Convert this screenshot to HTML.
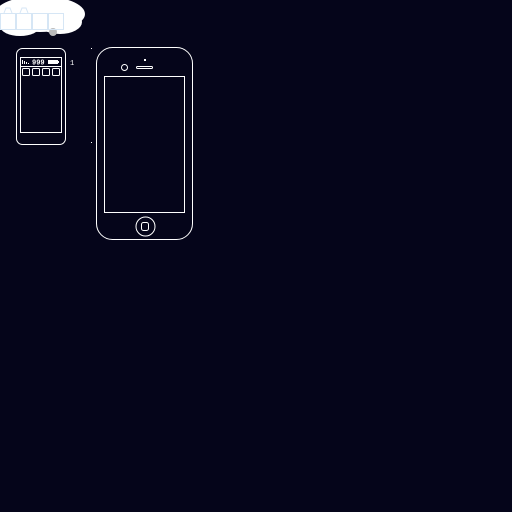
<!DOCTYPE html><html><head><style>body{margin:0;background:#05051a;width:512px;height:512px;overflow:hidden}</style></head><body>
<svg width="512" height="512" viewBox="0 0 512 512" xmlns="http://www.w3.org/2000/svg" style="position:absolute;left:0;top:0">
<g fill="#fff">
<ellipse cx="40" cy="14" rx="45" ry="18"/>
<ellipse cx="20" cy="26" rx="20" ry="10"/>
<ellipse cx="60" cy="22" rx="22" ry="12"/>
<circle cx="53" cy="32" r="4" fill="#bbb"/>
</g>
<g fill="none" stroke="#d6e6f5" stroke-width="1">
<rect x="0.5" y="13.5" width="15" height="16"/><rect x="16.5" y="13.5" width="15" height="16"/><rect x="32.5" y="13.5" width="15" height="16"/><rect x="48.5" y="13.5" width="15" height="16"/>
<path d="M4 13 l2-5 h4 l2 5 M20 13 l2-5 h4 l2 5"/>
</g>
<g fill="none" stroke="#fff" stroke-width="1">
<rect x="16.5" y="48.5" width="49" height="96" rx="6"/>
<rect x="20.5" y="57.5" width="41" height="75"/>
<line x1="20" y1="66.5" x2="62" y2="66.5"/>
<rect x="22.5" y="68.5" width="7" height="7" rx="1"/><rect x="32.5" y="68.5" width="7" height="7" rx="1"/><rect x="42.5" y="68.5" width="7" height="7" rx="1"/><rect x="52.5" y="68.5" width="7" height="7" rx="1"/>
<rect x="96.5" y="47.5" width="96" height="192" rx="16"/>
<rect x="104.5" y="76.5" width="80" height="136"/>
<circle cx="124.5" cy="67.5" r="3"/>
<rect x="136.5" y="66.5" width="16" height="2" rx="1"/>
<circle cx="145.5" cy="226.5" r="9.5"/>
<rect x="141.5" y="222.5" width="7" height="8" rx="2"/>
</g>
<g fill="#fff">
<rect x="48" y="60" width="10" height="4"/><rect x="58" y="61" width="1" height="2"/>
<rect x="22" y="60" width="1" height="4"/><rect x="24" y="61" width="1" height="3"/><rect x="26" y="62" width="1" height="2"/><rect x="28" y="63" width="1" height="1"/>
<rect x="144" y="59" width="2" height="2"/>
<rect x="91" y="48" width="1" height="1"/><rect x="91" y="142" width="1" height="1"/>
</g>
<text x="32" y="64.5" font-family="Liberation Mono, monospace" font-size="7" font-weight="bold" fill="#fff">999</text>
<text x="70" y="65" font-family="Liberation Mono, monospace" font-size="7" fill="#fff">1</text>
</svg>
</body></html>
